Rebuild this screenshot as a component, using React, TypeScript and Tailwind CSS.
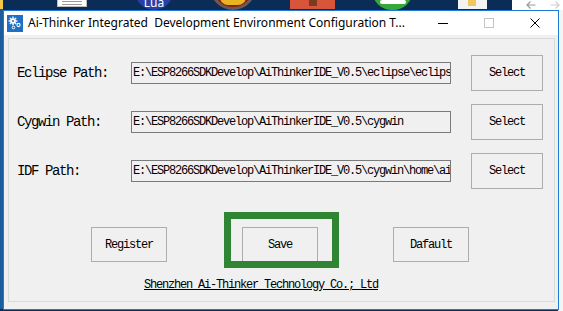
import React from "react";

const mono = { fontFamily: '"Liberation Mono", "DejaVu Sans Mono", monospace' };

const paths = [
  { label: "Eclipse Path:", value: "E:\\ESP8266SDKDevelop\\AiThinkerIDE_V0.5\\eclipse\\eclips" },
  { label: "Cygwin Path:", value: "E:\\ESP8266SDKDevelop\\AiThinkerIDE_V0.5\\cygwin" },
  { label: "IDF Path:", value: "E:\\ESP8266SDKDevelop\\AiThinkerIDE_V0.5\\cygwin\\home\\ai" },
];

const AppIcon = () => (
  <svg width="16" height="17" viewBox="0 0 16 17">
    <rect width="16" height="17" fill="#1f6fc5" />
    <g fill="#fff">
      <circle cx="6" cy="6" r="2.6" />
      <rect x="5.3" y="1.6" width="1.4" height="8.8" />
      <rect x="1.6" y="5.3" width="8.8" height="1.4" />
      <rect x="5.3" y="1.6" width="1.4" height="8.8" transform="rotate(45 6 6)" />
      <rect x="5.3" y="1.6" width="1.4" height="8.8" transform="rotate(-45 6 6)" />
    </g>
    <circle cx="6" cy="6" r="1" fill="#1f6fc5" />
    <circle cx="11.5" cy="10" r="1.6" fill="none" stroke="#fff" strokeWidth="1.1" />
    <circle cx="6.5" cy="12.5" r="1.3" fill="none" stroke="#fff" strokeWidth="1" />
  </svg>
);

const WinButton = ({ children, className = "" }: { children: React.ReactNode; className?: string }) => (
  <div
    className={`flex items-center justify-center border border-[#adadad] bg-[#f0f0f0] text-[12px] tracking-[-1.2px] text-black ${className}`}
    style={mono}
  >
    {children}
  </div>
);

export default function App() {
  return (
    <div className="relative h-[311px] w-[563px] overflow-hidden bg-[#0b2c56]">
      {/* desktop behind the dialog */}
      <div className="absolute left-0 top-0 h-[9px] w-[3px] bg-[#f2c94c]" />
      <div className="absolute left-0 top-[9px] h-[300px] w-[3px] bg-[#1d5d9e]" />
      <div className="absolute left-[57px] top-0 h-[7px] w-[30px] border-x border-b border-[#bbb] bg-white">
        <div className="mx-[4px] mt-[1px] h-px bg-[#999]" />
        <div className="mx-[4px] mt-[2px] h-px bg-[#999]" />
      </div>
      <div className="absolute left-[135px] top-[-28px] flex h-[38px] w-[38px] items-end justify-center rounded-full bg-[#2a3fa6] pb-[1px] text-[12px] leading-[12px] text-white" style={{ fontFamily: '"Noto Sans", sans-serif' }}>
        Lua
      </div>
      <div className="absolute left-[210px] top-[-36px] h-[46px] w-[46px] rounded-full border-[3px] border-[#6b5a55] bg-[#8f1d14]">
        <div className="mx-auto mt-[30px] h-[8px] w-[26px] rounded-b-full bg-[#e8b420]" />
      </div>
      <div className="absolute left-[290px] top-0 h-[9px] w-[45px] bg-[#d8553a]">
        <div className="mx-auto h-[6px] w-[8px] bg-[#7a3b20]" />
      </div>
      <div className="absolute left-[372px] top-[-30px] h-[40px] w-[41px] rounded-full bg-[#36a83a]">
        <div className="mx-auto mt-[30px] h-[4px] w-[26px] rounded-full bg-white" />
      </div>
      <div className="absolute left-[458px] top-0 h-[9px] w-[29px] bg-[#f3f3f3]">
        <div className="ml-[10px] h-[6px] w-[8px] bg-[#f0c75a]" />
      </div>
      <div className="absolute left-[512px] top-0 flex h-[10px] w-[51px] items-center gap-[14px] bg-white pl-[14px]">
        <svg width="10" height="8" viewBox="0 0 10 8">
          <path d="M9.5 4 H1 M4.5 0.5 L1 4 L4.5 7.5" fill="none" stroke="#9a9a9a" strokeWidth="1.2" />
        </svg>
        <svg width="10" height="8" viewBox="0 0 10 8">
          <path d="M0.5 4 H9 M5.5 0.5 L9 4 L5.5 7.5" fill="none" stroke="#cfcfcf" strokeWidth="1.2" />
        </svg>
      </div>
      <div className="absolute left-[558px] top-[10px] h-[301px] w-[5px] bg-[#f4f4f4]" />

      {/* dialog */}
      <div className="relative z-10 ml-[3px] mt-[10px] flex h-[300px] w-[556px] flex-col border border-[#1e7ad6] bg-[#f0f0f0]">
        <div className="flex h-[24px] items-center bg-white">
          <div className="ml-[3px]">
            <AppIcon />
          </div>
          <div
            className="ml-[5px] whitespace-pre text-[12px] text-black"
            style={{ fontFamily: '"Noto Sans", "Open Sans", sans-serif' }}
          >
            {"Ai-Thinker Integrated  Development Environment Configuration T..."}
          </div>
          <div className="ml-auto flex h-full">
            <div className="flex w-[46px] items-center justify-center">
              <div className="h-px w-[10px] bg-black" />
            </div>
            <div className="flex w-[46px] items-center justify-center">
              <div className="h-[10px] w-[10px] border border-[#c4c4c4]" />
            </div>
            <div className="flex w-[46px] items-center justify-center">
              <svg width="10" height="10" viewBox="0 0 10 10">
                <path d="M0.5 0.5 L9.5 9.5 M9.5 0.5 L0.5 9.5" stroke="#000" strokeWidth="1" />
              </svg>
            </div>
          </div>
        </div>

        <div className="flex-1 pb-[7px] pl-[4px] pr-[3px] pt-[3px]">
          <div className="h-full border border-[#dadada] pl-[8px] pt-[16px]">
            <div className="flex flex-col gap-[13px]">
              {paths.map((p) => (
                <div key={p.label} className="flex h-[36px] items-center">
                  <div className="w-[114px] text-[14px] tracking-[-1.4px] text-black" style={mono}>
                    {p.label}
                  </div>
                  <div
                    className="h-[22px] w-[320px] overflow-hidden whitespace-nowrap border border-[#7a7a7a] bg-[#f0f0f0] pl-px text-[12px] leading-[20px] tracking-[-1.2px] text-black"
                    style={mono}
                  >
                    {p.value}
                  </div>
                  <WinButton className="ml-[20px] h-[36px] w-[72px]">Select</WinButton>
                </div>
              ))}
            </div>

            <div className="ml-[74px] mt-[38px] flex gap-[75px]">
              <WinButton className="h-[35px] w-[76px]">Register</WinButton>
              <div className="relative">
                <WinButton className="h-[35px] w-[76px]">Save</WinButton>
                <div className="absolute left-[-18px] top-[-15px] h-[56px] w-[115px] border-[7px] border-[#2f8533]" />
              </div>
              <WinButton className="h-[35px] w-[76px]">Dafault</WinButton>
            </div>

            <div
              className="ml-[127px] mt-[16px] text-[12px] leading-[14px] tracking-[-1.2px] text-black underline"
              style={mono}
            >
              Shenzhen Ai-Thinker Technology Co.; Ltd
            </div>
          </div>
        </div>
      </div>
    </div>
  );
}
